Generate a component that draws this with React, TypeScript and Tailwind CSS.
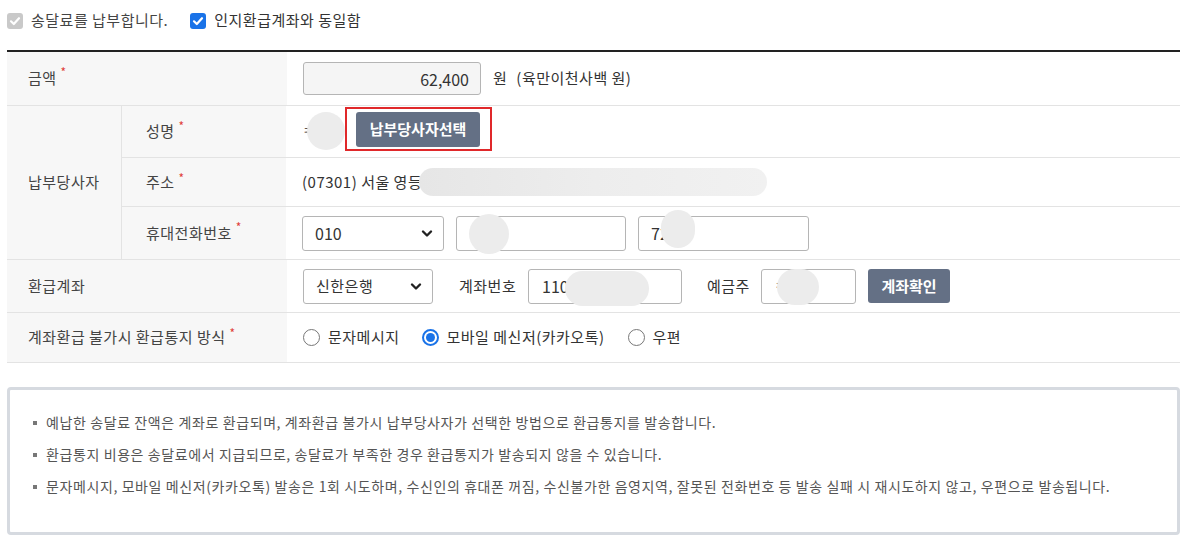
import React from "react";

const font = { fontFamily: '"Noto Sans CJK KR", "Noto Sans", sans-serif' };

function Check({ color }: { color: string }) {
  return (
    <span className={`inline-flex h-[16px] w-[16px] items-center justify-center rounded-[3px] ${color}`}>
      <svg width="12" height="12" viewBox="0 0 12 12" fill="none">
        <path d="M2 6.3 L4.8 9 L10 3.2" stroke="white" strokeWidth="2.2" strokeLinecap="round" strokeLinejoin="round" />
      </svg>
    </span>
  );
}

function Star() {
  return <span className="ml-[4px] self-start mt-[14px] text-[12px] text-[#e0403a] leading-none tracking-normal">*</span>;
}

function Chevron() {
  return (
    <svg width="12" height="9" viewBox="0 0 12 9" fill="none">
      <path d="M2 2.5 L6 6.5 L10 2.5" stroke="#222" strokeWidth="2.4" strokeLinecap="round" strokeLinejoin="round" />
    </svg>
  );
}

function Radio({ checked }: { checked?: boolean }) {
  return checked ? (
    <span className="flex h-[17px] w-[17px] shrink-0 items-center justify-center rounded-full border-2 border-[#1a73e8] bg-white">
      <span className="h-[9px] w-[9px] rounded-full bg-[#1a73e8]" />
    </span>
  ) : (
    <span className="block h-[17px] w-[17px] shrink-0 rounded-full border border-[#777] bg-white" />
  );
}

function Bullet() {
  return <span className="mr-[9px] inline-block h-[4px] w-[4px] bg-[#777]" />;
}

export default function App() {
  return (
    <div style={font} className="w-[1200px] h-[550px] bg-white text-[15px] tracking-[0.5px] text-[#333] relative overflow-hidden">
      {/* top checks */}
      <div className="flex items-center h-[40px] pt-[1px] pl-[7px]">
        <Check color="bg-[#c9c9c9]" />
        <span className="ml-[8px] text-[#444]">송달료를 납부합니다.</span>
        <span className="ml-[22px] flex"><Check color="bg-[#1a73e8]" /></span>
        <span className="ml-[8px] text-[#333]">인지환급계좌와 동일함</span>
      </div>

      {/* table */}
      <div className="mt-[10px] ml-[7px] w-[1173px] border-t-2 border-[#222] border-b border-b-[#e3e3e3]">
        {/* amount */}
        <div className="flex h-[54px] border-b border-[#e3e3e3]">
          <div className="w-[280px] bg-[#f7f7f7] flex items-center pl-[21px] text-[#444]">
            금액<Star />
          </div>
          <div className="flex items-center pl-[16px]">
            <div className="w-[178px] h-[33px] border border-[#b5b5b5] rounded-[3px] bg-[#f5f5f5] flex items-center justify-end pr-[11px] text-[16px] tracking-normal text-[#333]">
              62,400
            </div>
            <span className="ml-[12px]">원</span>
            <span className="ml-[9px]">(육만이천사백 원)</span>
          </div>
        </div>

        {/* 납부당사자 group */}
        <div className="flex border-b border-[#e3e3e3]">
          <div className="w-[115px] bg-[#f7f7f7] flex items-center pl-[21px] border-r border-[#e3e3e3] text-[#444]">
            납부당사자
          </div>
          <div className="flex-1 flex flex-col">
            <div className="flex h-[52px] border-b border-[#e3e3e3]">
              <div className="w-[164px] bg-[#f7f7f7] flex items-center pl-[24px] text-[#444]">
                성명<Star />
              </div>
              <div className="flex items-center pl-[16px]">
                <span className="relative text-[#555] w-[14px]">
                  ㅋ
                  <span className="absolute left-[5px] top-[-8px] h-[38px] w-[38px] rounded-full bg-[#ececec]" />
                </span>
                <div className="ml-[29px] mb-[6px] border-2 border-[#e0282a] pl-[9px] pr-[10px] pt-[3px] pb-[2px]">
                  <div className="h-[35px] w-[124px] rounded-[3px] bg-[#647085] text-white font-bold text-[15px] tracking-normal flex items-center justify-center">
                    납부당사자선택
                  </div>
                </div>
              </div>
            </div>
            <div className="flex h-[49px] border-b border-[#e3e3e3]">
              <div className="w-[164px] bg-[#f7f7f7] flex items-center pl-[24px] text-[#444]">
                주소<Star />
              </div>
              <div className="flex items-center pl-[16px] relative">
                <span>(07301) 서울 영등</span>
                <span className="ml-[-3px] h-[28px] w-[348px] rounded-full bg-gradient-to-r from-[#e6e6e6] via-[#ededed] to-[#f1f1f1]" />
              </div>
            </div>
            <div className="flex h-[52px]">
              <div className="w-[164px] bg-[#f7f7f7] flex items-center pl-[24px] text-[#444]">
                휴대전화번호<Star />
              </div>
              <div className="flex items-center pl-[16px] gap-[12px]">
                <div className="w-[142px] h-[35px] border border-[#b5b5b5] rounded-[3px] flex items-center justify-between pl-[12px] pr-[10px] text-[16px] tracking-normal">
                  <span>010</span>
                  <Chevron />
                </div>
                <div className="relative w-[170px] h-[35px] border border-[#b5b5b5] rounded-[3px]">
                  <span className="absolute left-[12px] top-[-3px] h-[40px] w-[40px] rounded-full bg-[#ececec]" />
                </div>
                <div className="relative w-[171px] h-[35px] border border-[#b5b5b5] rounded-[3px] flex items-center pl-[12px] text-[16px] tracking-normal">
                  <span>72</span>
                  <span className="absolute left-[22px] top-[-7px] h-[38px] w-[34px] rounded-full bg-[#ececec]" />
                </div>
              </div>
            </div>
          </div>
        </div>

        {/* 환급계좌 */}
        <div className="flex h-[53px] border-b border-[#e3e3e3]">
          <div className="w-[280px] bg-[#f7f7f7] flex items-center pl-[21px] text-[#444]">
            환급계좌
          </div>
          <div className="flex items-center pl-[16px]">
            <div className="w-[130px] h-[35px] border border-[#b5b5b5] rounded-[3px] flex items-center justify-between pl-[12px] pr-[10px]">
              <span>신한은행</span>
              <Chevron />
            </div>
            <span className="ml-[26px] w-[60px]">계좌번호</span>
            <div className="relative ml-[9px] w-[154px] h-[35px] border border-[#b5b5b5] rounded-[3px] flex items-center pl-[13px] text-[16px] tracking-normal">
              <span>110</span>
              <span className="absolute left-[36px] top-[1px] h-[35px] w-[84px] rounded-full bg-[#ececec]" />
            </div>
            <span className="ml-[25px] w-[45px]">예금주</span>
            <div className="relative ml-[9px] w-[95px] h-[35px] border border-[#b5b5b5] rounded-[3px] flex items-center pl-[12px] text-[#555]">
              <span>ㅋ</span>
              <span className="absolute left-[15px] top-[-1px] h-[36px] w-[42px] rounded-full bg-[#ececec]" />
            </div>
            <div className="ml-[12px] h-[34px] w-[82px] rounded-[3px] bg-[#647085] text-white font-bold tracking-normal flex items-center justify-center">
              계좌확인
            </div>
          </div>
        </div>

        {/* 통지 방식 */}
        <div className="flex h-[49px]">
          <div className="w-[280px] bg-[#f7f7f7] flex items-center pl-[21px] text-[#444]">
            계좌환급 불가시 환급통지 방식<Star />
          </div>
          <div className="flex items-center pl-[16px]">
            <Radio />
            <span className="ml-[8px]">문자메시지</span>
            <span className="ml-[22px] flex"><Radio checked /></span>
            <span className="ml-[8px]">모바일 메신저(카카오톡)</span>
            <span className="ml-[23px] flex"><Radio /></span>
            <span className="ml-[8px]">우편</span>
          </div>
        </div>
      </div>

      {/* info box */}
      <div className="mt-[24px] ml-[7px] w-[1173px] h-[148px] border-[3px] border-[#d6dae0] rounded-[4px] pl-[23px] pt-[22px] text-[14px] tracking-[0.6px] text-[#555]">
        <div className="flex flex-col gap-[11px] leading-[21px]">
          <div className="flex items-center"><Bullet />예납한 송달료 잔액은 계좌로 환급되며, 계좌환급 불가시 납부당사자가 선택한 방법으로 환급통지를 발송합니다.</div>
          <div className="flex items-center"><Bullet />환급통지 비용은 송달료에서 지급되므로, 송달료가 부족한 경우 환급통지가 발송되지 않을 수 있습니다.</div>
          <div className="flex items-center"><Bullet />문자메시지, 모바일 메신저(카카오톡) 발송은 1회 시도하며, 수신인의 휴대폰 꺼짐, 수신불가한 음영지역, 잘못된 전화번호 등 발송 실패 시 재시도하지 않고, 우편으로 발송됩니다.</div>
        </div>
      </div>
    </div>
  );
}
